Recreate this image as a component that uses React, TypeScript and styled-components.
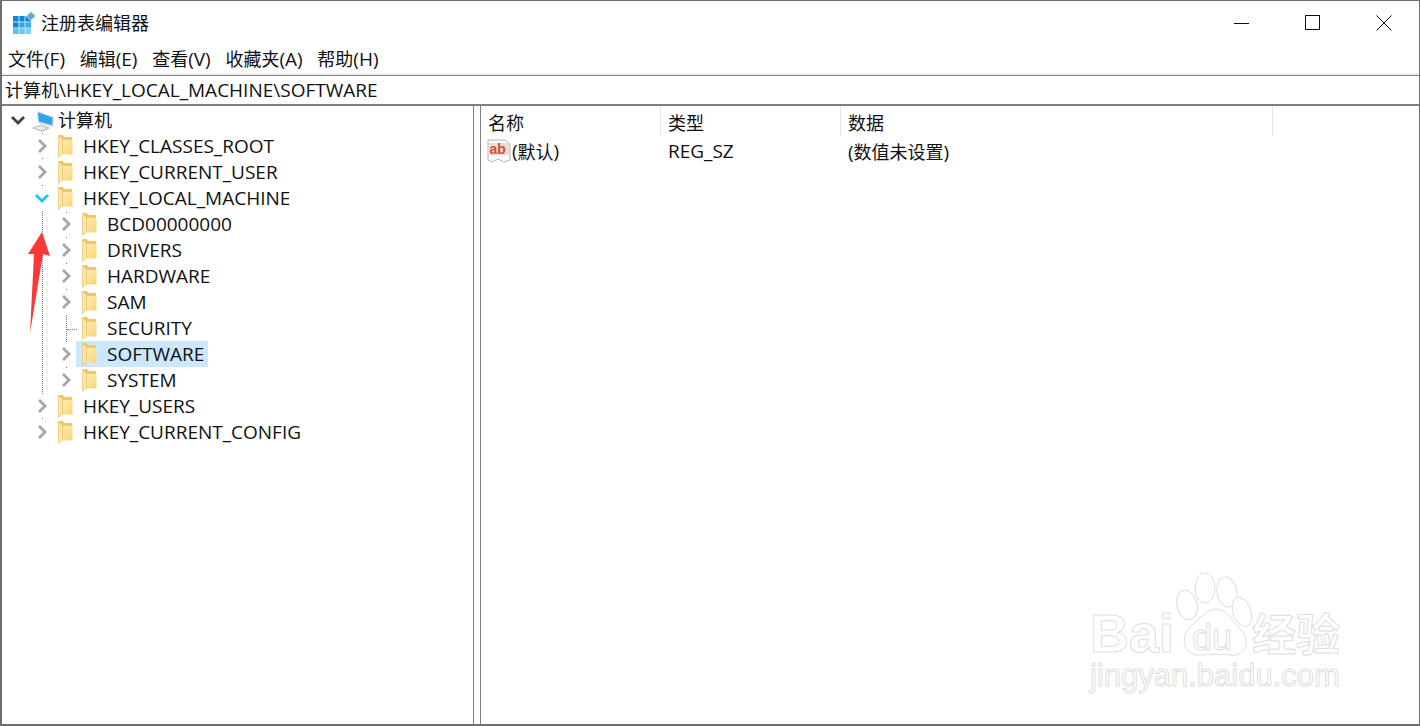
import styled, { createGlobalStyle } from "styled-components";

const GlobalStyle = createGlobalStyle`
  html, body {
    margin: 0;
    padding: 0;
    background: #fff;
  }
`;

const Window = styled.div`
  position: relative;
  box-sizing: border-box;
  width: 1420px;
  height: 726px;
  display: flex;
  flex-direction: column;
  overflow: hidden;
  background: #fff;
  border: 2px solid #6e6e6e;
  border-top-width: 1px;
  border-right-width: 1px;
  font-family: "Open Sans", "Noto Sans CJK SC", sans-serif;
  font-size: 19px;
  color: #111;
`;

const Han = styled.span`
  font-size: 18px;
`;

const TitleBar = styled.div`
  height: 43px;
  display: flex;
  align-items: center;
  padding-left: 9px;
  flex: none;
`;

const AppTitle = styled.div`
  margin-left: 4px;
  flex: 1;
  line-height: 24px;
`;

const WinButton = styled.div`
  width: 71px;
  height: 43px;
  display: flex;
  align-items: center;
  justify-content: center;
`;

const MenuBar = styled.div`
  height: 29px;
  display: flex;
  align-items: center;
  gap: 14.7px;
  padding-left: 6px;
  background: #fff;
  flex: none;
  border-bottom: 2px solid #f0f0f0;
`;

const MenuItem = styled.span`
  line-height: 24px;
`;

const AddressBar = styled.div`
  height: 28px;
  line-height: 29px;
  padding-left: 3px;
  flex: none;
  border-top: 1px solid #808080;
  border-bottom: 2px solid #808080;
`;

const Panes = styled.div`
  flex: 1;
  display: flex;
  min-height: 0;
`;

const TreePane = styled.div`
  position: relative;
  width: 471px;
  flex: none;
  padding-top: 1px;
  border-right: 1px solid #808080;
`;

const Splitter = styled.div`
  width: 6px;
  flex: none;
  background: #fff;
`;

const ListPane = styled.div`
  flex: 1;
  border-left: 1px solid #808080;
`;

const TreeRow = styled.div<{ $depth: number }>`
  height: 26px;
  display: flex;
  align-items: center;
  padding-left: ${(p) => 8 + p.$depth * 24}px;
`;

const Twisty = styled.span`
  width: 16px;
  height: 16px;
  flex: none;
  display: flex;
  align-items: center;
  justify-content: center;
`;

const NodeBody = styled.span<{ $selected?: boolean }>`
  display: flex;
  align-items: center;
  height: 26px;
  margin-left: 2px;
  padding: 0 4px 0 6px;
  background: ${(p) => (p.$selected ? "#cce8ff" : "transparent")};
`;

const NodeLabel = styled.span`
  margin-left: 9px;
  white-space: nowrap;
`;

const RootLabel = styled.span`
  margin: 0 0 2px 3px;
  white-space: nowrap;
`;

const RootIcon = styled.svg`
  margin-left: 3px;
  flex: none;
`;

const Dotted = styled.div<{ $x: number; $y: number; $h: number }>`
  position: absolute;
  left: ${(p) => p.$x}px;
  top: ${(p) => p.$y}px;
  height: ${(p) => p.$h}px;
  border-left: 1px dotted #777;
`;

const DottedH = styled.div<{ $x: number; $y: number; $w: number }>`
  position: absolute;
  left: ${(p) => p.$x}px;
  top: ${(p) => p.$y}px;
  width: ${(p) => p.$w}px;
  border-top: 1px dotted #777;
`;

const ArrowMark = styled.svg`
  position: absolute;
  left: 26px;
  top: 126px;
`;

const ColumnHeads = styled.div`
  display: flex;
  height: 30px;
  align-items: center;
`;

const ColumnHead = styled.div<{ $w: number }>`
  box-sizing: border-box;
  width: ${(p) => p.$w}px;
  height: 30px;
  line-height: 35px;
  padding-left: 7px;
  border-right: 1px solid #e5e5e5;
`;

const ValueRow = styled.div`
  display: flex;
  height: 26px;
  padding-top: 2px;
  align-items: center;
`;

const ValueName = styled.div`
  width: 180px;
  box-sizing: border-box;
  padding-left: 5px;
  display: flex;
  align-items: center;
`;

const ValueCell = styled.div<{ $w: number }>`
  width: ${(p) => p.$w}px;
  box-sizing: border-box;
  padding-left: 7px;
`;

const Watermark = styled.div`
  position: absolute;
  left: 1088px;
  top: 572px;
  width: 260px;
  height: 125px;
  color: #fff;
  -webkit-text-stroke: 1px #dedede;
`;

const WaterBrand = styled.span`
  position: absolute;
  left: 0;
  top: 35px;
  font: 700 54px/50px "Liberation Sans", sans-serif;
`;

const WaterDu = styled.span`
  position: absolute;
  left: 102px;
  top: 50px;
  font: 400 36px/30px "Liberation Sans", sans-serif;
`;

const WaterCn = styled.span`
  position: absolute;
  left: 162px;
  top: 34px;
  font: 700 44px/50px "Noto Sans CJK SC", sans-serif;
`;

const WaterUrl = styled.span`
  position: absolute;
  left: 0;
  top: 85px;
  font: 400 31px/36px "Liberation Sans", sans-serif;
`;

const PawSvg = styled.svg`
  position: absolute;
  left: 78px;
  top: 0;
`;

const Chevron = ({ open, color }: { open?: boolean; color: string }) => (
  <svg width="14" height="14" viewBox="0 0 14 14">
    <path
      d={open ? "M1 4 L7 10 L13 4" : "M4 1 L10 7 L4 13"}
      fill="none"
      stroke={color}
      strokeWidth="2.8"
    />
  </svg>
);

const Folder = () => (
  <svg width="16" height="24" viewBox="0 0 16 24">
    <defs>
      <linearGradient id="fold" x1="0" y1="0" x2="1" y2="1">
        <stop offset="0" stopColor="#fdeeb4" />
        <stop offset="1" stopColor="#f8d377" />
      </linearGradient>
    </defs>
    <path d="M1 1 H5 L6 3 H14 V20 H1 Z" fill="#efc768" />
    <path d="M4 6 H14.5 V20.5 H4 Z" fill="url(#fold)" />
    <path d="M0.5 1.5 L4.5 5 V20 L0.5 23.5 Z" fill="#fbe6a2" stroke="#e3bc62" strokeWidth="0.6" />
  </svg>
);

const AppIcon = () => (
  <svg width="26" height="24" viewBox="0 0 26 24">
    <rect x="2" y="5" width="18" height="18" fill="#0f86cf" />
    <rect x="8" y="11" width="6" height="6" fill="#2ca4e8" />
    <rect x="14" y="11" width="6" height="6" fill="#35aeea" />
    <rect x="2" y="17" width="6" height="6" fill="#59c0f0" />
    <rect x="8" y="17" width="6" height="6" fill="#67c8f3" />
    <rect x="14" y="17" width="6" height="6" fill="#7ed3f7" />
    <path d="M2 11 H20 M2 17 H20 M8 5 V23 M14 5 V23" stroke="#bfe4f7" strokeWidth="1" />
    <path d="M20 0.5 L24.5 5 L20 9.5 L15.5 5 Z" fill="#5fa8d3" stroke="#d5e7f2" />
  </svg>
);

const ComputerIcon = () => (
  <RootIcon width="26" height="24" viewBox="0 0 26 24">
    <path d="M8 3 L25 9 L24.5 19 L9 15 Z" fill="#cfd6dc" />
    <path d="M9 4.5 L23.5 9.5 L23 17 L10 13.5 Z" fill="#2fa3ee" />
    <path d="M2 20 L12 16.5 L22 20 L13 24 Z" fill="#c6cacd" />
    <path d="M6 20 L12 18 L17 20 L12 22 Z" fill="#eceeef" />
  </RootIcon>
);

const StringIcon = () => (
  <svg width="26" height="24" viewBox="0 0 26 24">
    <path d="M2 1 H19 L24 5 V21 L18 23 L12 20 L6 23 L2 21 Z" fill="#fbfbfb" stroke="#b5b5b5" />
    <rect x="3" y="4" width="20" height="12" rx="1" fill="#e4e0dc" />
    <text x="3.5" y="15" fontFamily="Liberation Sans" fontWeight="700" fontSize="14" fill="#dc4a2a">
      ab
    </text>
  </svg>
);

const menus = [
  ["文件", "(F)"],
  ["编辑", "(E)"],
  ["查看", "(V)"],
  ["收藏夹", "(A)"],
  ["帮助", "(H)"],
];

type Node = { label: string; depth: number; state: "closed" | "active" | "none"; selected?: boolean };

const nodes: Node[] = [
  { label: "HKEY_CLASSES_ROOT", depth: 1, state: "closed" },
  { label: "HKEY_CURRENT_USER", depth: 1, state: "closed" },
  { label: "HKEY_LOCAL_MACHINE", depth: 1, state: "active" },
  { label: "BCD00000000", depth: 2, state: "closed" },
  { label: "DRIVERS", depth: 2, state: "closed" },
  { label: "HARDWARE", depth: 2, state: "closed" },
  { label: "SAM", depth: 2, state: "closed" },
  { label: "SECURITY", depth: 2, state: "none" },
  { label: "SOFTWARE", depth: 2, state: "closed", selected: true },
  { label: "SYSTEM", depth: 2, state: "closed" },
  { label: "HKEY_USERS", depth: 1, state: "closed" },
  { label: "HKEY_CURRENT_CONFIG", depth: 1, state: "closed" },
];

// single dots of the tree lines that show between the chevrons: [x, y] inside the pane
const treeDots = [
  [40, 27],
  [40, 52],
  [40, 79],
  [64, 106],
  [64, 131],
  [64, 157],
  [64, 183],
  [64, 261],
  [40, 312],
];

export default function App() {
  return (
    <>
      <GlobalStyle />
      <Window>
        <TitleBar>
          <AppIcon />
          <AppTitle>
            <Han>注册表编辑器</Han>
          </AppTitle>
          <WinButton>
            <svg width="16" height="16" viewBox="0 0 16 16">
              <path d="M0 8.5 H15" stroke="#111" />
            </svg>
          </WinButton>
          <WinButton>
            <svg width="16" height="16" viewBox="0 0 16 16">
              <rect x="0.5" y="0.5" width="14" height="14" fill="none" stroke="#111" />
            </svg>
          </WinButton>
          <WinButton>
            <svg width="16" height="16" viewBox="0 0 16 16">
              <path d="M0.5 0.5 L15.5 15.5 M15.5 0.5 L0.5 15.5" stroke="#111" />
            </svg>
          </WinButton>
        </TitleBar>
        <MenuBar>
          {menus.map(([cn, key]) => (
            <MenuItem key={key}>
              <Han>{cn}</Han>
              {key}
            </MenuItem>
          ))}
        </MenuBar>
        <AddressBar>
          <Han>计算机</Han>\HKEY_LOCAL_MACHINE\SOFTWARE
        </AddressBar>
        <Panes>
          <TreePane>
            <TreeRow $depth={0}>
              <Twisty>
                <Chevron open color="#404040" />
              </Twisty>
              <ComputerIcon />
              <RootLabel>
                <Han>计算机</Han>
              </RootLabel>
            </TreeRow>
            {nodes.map((n) => (
              <TreeRow key={n.label} $depth={n.depth}>
                <Twisty>
                  {n.state === "closed" && <Chevron color="#a6a6a6" />}
                  {n.state === "active" && <Chevron open color="#1cc4f7" />}
                </Twisty>
                <NodeBody $selected={n.selected}>
                  <Folder />
                  <NodeLabel>{n.label}</NodeLabel>
                </NodeBody>
              </TreeRow>
            ))}
            {treeDots.map(([x, y]) => (
              <Dotted key={`${x}-${y}`} $x={x} $y={y} $h={1} />
            ))}
            <Dotted $x={40} $y={105} $h={183} />
            <Dotted $x={64} $y={209} $h={27} />
            <DottedH $x={65} $y={223} $w={10} />
            <ArrowMark width="26" height="104" viewBox="0 0 26 104">
              <path d="M14 0 L22 24 L15 22 L2 101 L6 22 L0 22 Z" fill="#fb3838" />
            </ArrowMark>
          </TreePane>
          <Splitter />
          <ListPane>
            <ColumnHeads>
              <ColumnHead $w={180}>
                <Han>名称</Han>
              </ColumnHead>
              <ColumnHead $w={180}>
                <Han>类型</Han>
              </ColumnHead>
              <ColumnHead $w={432}>
                <Han>数据</Han>
              </ColumnHead>
            </ColumnHeads>
            <ValueRow>
              <ValueName>
                <StringIcon />
                (<Han>默认</Han>)
              </ValueName>
              <ValueCell $w={180}>REG_SZ</ValueCell>
              <ValueCell $w={300}>
                (<Han>数值未设置</Han>)
              </ValueCell>
            </ValueRow>
          </ListPane>
        </Panes>
        <Watermark>
          <PawSvg width="90" height="90" viewBox="0 0 90 90" fill="#fff" stroke="#dedede">
            <ellipse cx="19" cy="32" rx="10" ry="15" transform="rotate(-15 19 32)" />
            <ellipse cx="37" cy="15" rx="10" ry="15" />
            <ellipse cx="59" cy="19" rx="10" ry="15" transform="rotate(-10 59 19)" />
            <ellipse cx="74" cy="39" rx="9" ry="15" transform="rotate(-20 74 39)" />
            <path d="M49 36 C58 36 64 48 72 56 C84 68 78 84 62 82 C54 81 44 81 34 82 C18 84 10 68 22 54 C32 46 38 36 49 36 Z" />
          </PawSvg>
          <WaterBrand>Bai</WaterBrand>
          <WaterDu>du</WaterDu>
          <WaterCn>经验</WaterCn>
          <WaterUrl>jingyan.baidu.com</WaterUrl>
        </Watermark>
      </Window>
    </>
  );
}
